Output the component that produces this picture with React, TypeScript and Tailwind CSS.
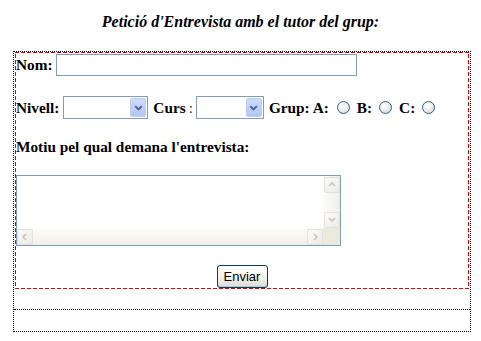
import React from "react";

function Select({ w }: { w: string }) {
  return (
    <div className={`relative h-[23px] ${w} border border-[#7f9db9] bg-white`}>
      <div className="absolute right-[1px] top-[1px] bottom-[1px] w-[16px] rounded-[2px] border border-[#bccdf7] bg-gradient-to-b from-[#cddbfc] to-[#b2c6f6] flex items-center justify-center">
        <svg width="9" height="6" viewBox="0 0 9 6">
          <path d="M1.2 1.2 L4.5 4.4 L7.8 1.2" stroke="#4d6185" strokeWidth="1.8" fill="none" />
        </svg>
      </div>
    </div>
  );
}

function Radio() {
  return (
    <span className="inline-block w-[13px] h-[13px] rounded-full border border-[#2c5f8c] bg-[radial-gradient(circle_at_40%_35%,#ffffff_0%,#f0f0ec_40%,#cfd0c8_100%)]" />
  );
}

function ArrowBtn({ dir }: { dir: "up" | "down" | "left" | "right" }) {
  const paths: Record<string, string> = {
    up: "M2 6 L5 3 L8 6",
    down: "M2 3 L5 6 L8 3",
    left: "M6 2 L3 5 L6 8",
    right: "M4 2 L7 5 L4 8",
  };
  return (
    <div className="w-[16px] h-[16px] rounded-[2px] border border-[#e3e2da] bg-gradient-to-br from-[#fbfbf8] to-[#ecebe3] flex items-center justify-center">
      <svg width="10" height="10" viewBox="0 0 10 10">
        <path d={paths[dir]} stroke="#c9c8bd" strokeWidth="1.6" fill="none" />
      </svg>
    </div>
  );
}

export default function App() {
  return (
    <div className="w-[481px] h-[341px] bg-white text-black font-['Liberation_Serif','Times_New_Roman',serif] overflow-hidden">
      <div className="h-[51px] pt-[13px] text-center text-[16px] leading-[18px] font-bold italic">
        Petició d'Entrevista amb el tutor del grup:
      </div>
      <div className="ml-[13px] w-[458px] border border-dotted border-black">
        <form className="mx-[1px] p-[1px] bg-[linear-gradient(90deg,#e00000_66%,transparent_66%),linear-gradient(90deg,#e00000_66%,transparent_66%),linear-gradient(0deg,#e00000_66%,transparent_66%),linear-gradient(0deg,#e00000_66%,transparent_66%)] bg-[length:6px_1px,6px_1px,1px_6px,1px_6px] [background-position:0_0,0_100%,0_0,100%_0] [background-repeat:repeat-x,repeat-x,repeat-y,repeat-y] text-[15.3px] font-bold leading-[18px]">
          <div className="mt-[1px] flex items-center h-[22px]">
            <span>Nom:</span>
            <div className="ml-[3px] w-[301px] h-[22px] border border-[#7f9db9] bg-white" />
          </div>
          <div className="mt-[20px] flex items-center h-[23px]">
            <span>Nivell:</span>
            <div className="ml-[4px]">
              <Select w="w-[85px]" />
            </div>
            <span className="ml-[5px]">Curs</span>
            <span className="ml-[3px] font-normal text-[#333]">:</span>
            <div className="ml-[3px]">
              <Select w="w-[68px]" />
            </div>
            <span className="ml-[5px]">Grup: A:</span>
            <span className="ml-[8px] flex"><Radio /></span>
            <span className="ml-[7px]">B:</span>
            <span className="ml-[7px] flex"><Radio /></span>
            <span className="ml-[7px]">C:</span>
            <span className="ml-[7px] flex"><Radio /></span>
          </div>
          <div className="mt-[19px] h-[18px]">Motiu pel qual demana l'entrevista:</div>
          <div className="mt-[19px] w-[325px] h-[71px] border border-[#7f9db9] bg-white flex">
            <div className="flex-1 flex flex-col">
              <div className="flex-1" />
              <div className="h-[17px] flex items-center bg-gradient-to-b from-[#fdfdfb] to-[#efeee6]">
                <ArrowBtn dir="left" />
                <div className="flex-1" />
                <ArrowBtn dir="right" />
              </div>
            </div>
            <div className="w-[17px] flex flex-col">
              <div className="flex-1 flex flex-col items-center bg-gradient-to-r from-[#fdfdfb] to-[#efeee6]">
                <div className="mt-[1px]"><ArrowBtn dir="up" /></div>
                <div className="flex-1" />
                <ArrowBtn dir="down" />
              </div>
              <div className="h-[17px] bg-[#ebeadb]" />
            </div>
          </div>
          <div className="mt-[19px] flex justify-center">
            <button
              type="button"
              className="w-[51px] h-[23px] rounded-[3px] border border-[#003c74] bg-gradient-to-b from-[#ffffff] via-[#f4f4f0] to-[#dedcd2] shadow-[inset_0_-1px_0_#c9c6b8,inset_0_1px_0_#fff] font-['Liberation_Sans',Arial,sans-serif] font-normal text-[13px] leading-[21px] text-black"
            >
              Enviar
            </button>
          </div>
        </form>
        <div className="h-[20px]" />
        <div className="h-[22px] border-t border-dotted border-black" />
      </div>
    </div>
  );
}
